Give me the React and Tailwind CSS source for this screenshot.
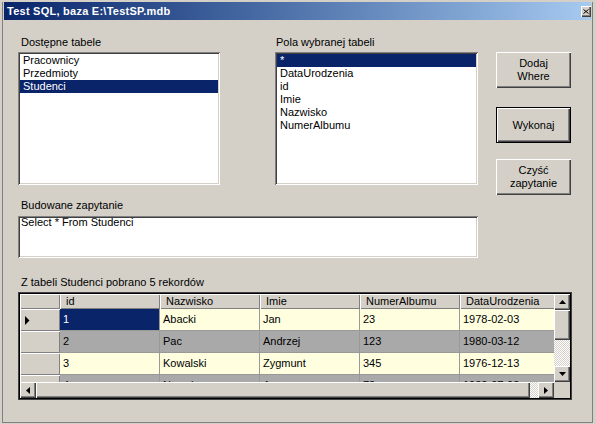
import React from 'react';

const raised = "shadow-[inset_1px_1px_0_#ffffff,inset_-1px_-1px_0_#404040,inset_-2px_-2px_0_#808080]";
const sunken = "shadow-[inset_1px_1px_0_#808080,inset_-1px_-1px_0_#ffffff,inset_2px_2px_0_#404040,inset_-2px_-2px_0_#d4d0c8]";
const hdr = "shadow-[inset_1px_1px_0_#ffffff,inset_-1px_-1px_0_#808080]";
const checker = "bg-[image:repeating-conic-gradient(#ffffff_0%_25%,#d4d0c8_0%_50%)] bg-[length:2px_2px]";

const rows = [
  { id: '1', n: 'Abacki', i: 'Jan', a: '23', d: '1978-02-03' },
  { id: '2', n: 'Pac', i: 'Andrzej', a: '123', d: '1980-03-12' },
  { id: '3', n: 'Kowalski', i: 'Zygmunt', a: '345', d: '1976-12-13' },
  { id: '4', n: 'Nowak', i: 'Anna', a: '73', d: '1982-07-08' },
];

const cols = ['id', 'Nazwisko', 'Imie', 'NumerAlbumu', 'DataUrodzenia'];

const Arrow = ({ dir }) => {
  const pts = {
    up: '0,4 3.5,0 7,4',
    down: '0,0 3.5,4 7,0',
    left: '4,0 0,3.5 4,7',
    right: '0,0 4,3.5 0,7',
  }[dir];
  const vertical = dir === 'up' || dir === 'down';
  return (
    <svg width={vertical ? 7 : 4} height={vertical ? 4 : 7} viewBox={vertical ? '0 0 7 4' : '0 0 4 7'}>
      <polygon points={pts} fill="#000" />
    </svg>
  );
};

const ScrollBtn = ({ dir }) => (
  <div className={`w-[16px] h-[16px] shrink-0 flex items-center justify-center bg-[#d4d0c8] ${raised}`}>
    <Arrow dir={dir} />
  </div>
);

const Button = ({ children, isDefault }) => (
  <div className={`h-[36px] w-[75px] ${isDefault ? 'border border-black' : ''}`}>
    <div className={`h-full w-full flex flex-col items-center justify-center text-center leading-[13px] bg-[#d4d0c8] ${raised}`}>
      {children}
    </div>
  </div>
);

const ListBox = ({ items, selected, width }) => (
  <div className={`${width} h-[133px] bg-white p-[2px] ${sunken}`}>
    {items.map((it, k) => (
      <div
        key={k}
        className={`h-[13px] leading-[13px] pl-[3px] whitespace-nowrap ${k === selected ? 'bg-[#0a246a] text-white' : ''}`}
      >
        {it}
      </div>
    ))}
  </div>
);

const App = () => {
  return (
    <div className="w-[596px] h-[424px] bg-[#d4d0c8] pt-[2px] pl-[2px] overflow-hidden font-['Liberation_Sans',Arial,sans-serif] text-[11px] text-black">
      <div className="w-[591px] h-[421px] border-l border-r border-b border-[#808080]">
        {/* title bar */}
        <div className="ml-[1px] w-[587px] h-[18px] flex items-center justify-between bg-gradient-to-r from-[#0a246a] to-[#a6caf0]">
          <span className="pl-[3px] pt-[1px] text-white font-bold tracking-[0.25px] leading-[13px]">Test SQL, baza E:\TestSP.mdb</span>
          <div className={`w-[10px] h-[11px] flex items-center justify-center bg-[#d4d0c8] ${raised}`}>
            <svg width="6" height="5" viewBox="0 0 6 5">
              <path d="M0.5 0.5 L5.5 4.5 M5.5 0.5 L0.5 4.5" stroke="#000" strokeWidth="1" />
            </svg>
          </div>
        </div>

        <div className="pl-[15px]">
          {/* top row */}
          <div className="mt-[16px] flex items-start">
            <div className="w-[202px]">
              <div className="h-[13px] leading-[13px] pl-[3px]">Dostępne tabele</div>
              <div className="mt-[3px]">
                <ListBox width="w-[202px]" items={['Pracownicy', 'Przedmioty', 'Studenci']} selected={2} />
              </div>
            </div>
            <div className="ml-[55px] w-[203px]">
              <div className="h-[13px] leading-[13px] pl-[1px]">Pola wybranej tabeli</div>
              <div className="mt-[3px]">
                <ListBox
                  width="w-[203px]"
                  items={['*', 'DataUrodzenia', 'id', 'Imie', 'Nazwisko', 'NumerAlbumu']}
                  selected={0}
                />
              </div>
            </div>
            <div className="ml-[18px] pt-[16px] flex flex-col">
              <Button>
                <span>Dodaj</span>
                <span>Where</span>
              </Button>
              <div className="mt-[19px]">
                <Button isDefault>Wykonaj</Button>
              </div>
              <div className="mt-[16px]">
                <Button>
                  <span>Czyść</span>
                  <span>zapytanie</span>
                </Button>
              </div>
            </div>
          </div>

          {/* query */}
          <div className="mt-[4px] h-[13px] leading-[13px] pl-[3px]">Budowane zapytanie</div>
          <div className={`mt-[4px] w-[460px] h-[42px] bg-white px-[3px] leading-[13px] ${sunken}`}>
            Select * From Studenci
          </div>

          <div className="mt-[18px] h-[13px] leading-[13px] pl-[3px]">Z tabeli Studenci pobrano 5 rekordów</div>

          {/* data grid */}
          <div className="mt-[3px] w-[554px] h-[108px] border border-[#404040]">
            <div className="w-full h-full border border-black bg-[#d4d0c8] flex flex-col">
              <div className="flex h-[88px]">
                <div className="w-[534px] h-full overflow-hidden">
                  <div className="flex h-[15px]">
                    <div className={`w-[40px] shrink-0 ${hdr}`} />
                    {cols.map((c) => (
                      <div key={c} className={`w-[100px] shrink-0 pl-[6px] leading-[15px] ${hdr}`}>
                        {c}
                      </div>
                    ))}
                  </div>
                  {rows.map((r, k) => {
                    const bg = k % 2 === 0 ? 'bg-[#ffffe0]' : 'bg-[#a9a9a9]';
                    const vals = [r.id, r.n, r.i, r.a, r.d];
                    return (
                      <div key={r.id} className="flex h-[22px]">
                        <div className={`w-[40px] shrink-0 flex items-center pl-[5px] bg-[#d4d0c8] ${hdr}`}>
                          {k === 0 && (
                            <svg width="5" height="9" viewBox="0 0 5 9">
                              <polygon points="0,0 4.5,4.5 0,9" fill="#000" />
                            </svg>
                          )}
                        </div>
                        {vals.map((v, j) => (
                          <div
                            key={j}
                            className={`w-[100px] shrink-0 pl-[3px] leading-[21px] border-r border-b border-[#999999] ${
                              k === 0 && j === 0 ? 'bg-[#0a246a] text-white' : bg
                            }`}
                          >
                            {v}
                          </div>
                        ))}
                      </div>
                    );
                  })}
                </div>
                <div className="w-[16px] h-full flex flex-col">
                  <ScrollBtn dir="up" />
                  <div className={`h-[30px] shrink-0 bg-[#d4d0c8] ${raised}`} />
                  <div className={`flex-1 ${checker}`} />
                  <ScrollBtn dir="down" />
                </div>
              </div>
              <div className="flex h-[16px]">
                <ScrollBtn dir="left" />
                <div className={`w-[494px] h-full bg-[#d4d0c8] ${raised}`} />
                <div className={`w-[8px] h-full ${checker}`} />
                <ScrollBtn dir="right" />
                <div className="w-[16px] h-full bg-[#d4d0c8]" />
              </div>
            </div>
          </div>
        </div>
      </div>
    </div>
  );
};

export default App;
